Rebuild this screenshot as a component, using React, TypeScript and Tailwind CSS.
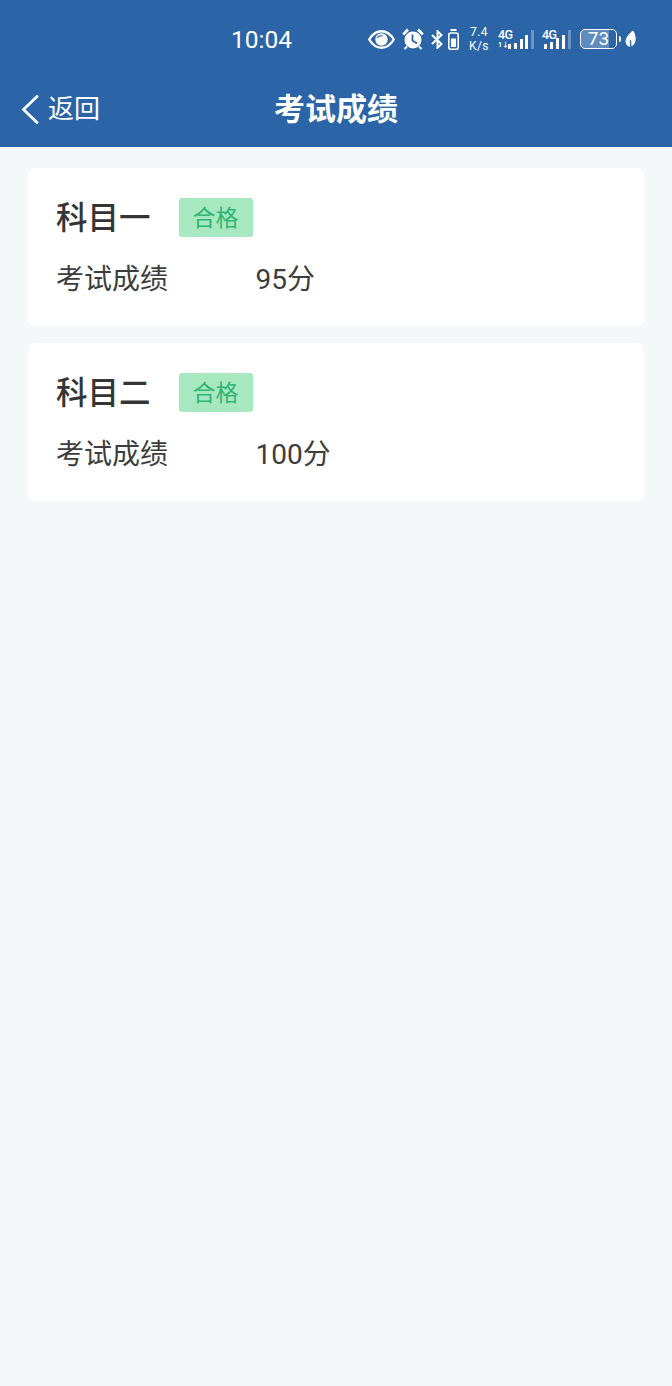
import React from "react";

const fontStack = "font-['Roboto','Noto_Sans_CJK_SC',sans-serif]";

const BAR_COLOR = "#2b65a8";

const SignalBars = ({ heights, gap }: { heights: number[]; gap: string }) => (
  <div className={`flex items-end h-[20px] ${gap}`}>
    {heights.map((h, i) => (
      <div
        key={i}
        className={i === heights.length - 1 ? "w-[3px] bg-white/30" : "w-[3px] bg-white"}
        style={{ height: h }}
      />
    ))}
  </div>
);

const StatusBar = () => (
  <div className="h-[80px] flex items-start text-white">
    <div className="ml-[231px] mt-[25px] w-[137px] text-[24.5px] leading-[30px]">10:04</div>
    <div className="flex items-center mt-[26px] h-[26px]">
      {/* eye */}
      <svg width="27" height="19" viewBox="0 0 27 19">
        <path d="M1.200 9.500C4.500 4 8.500 1.300 13.500 1.300S22.500 4 25.800 9.500C22.500 15 18.500 17.700 13.500 17.700S4.500 15 1.200 9.500Z" fill="none" stroke="#fff" strokeWidth="2.400" />
        <circle cx="13.500" cy="9.500" r="6.200" fill="#fff" />
        <path d="M8.500 8.500C9.500 5.500 13 4.500 16 6C13.500 6 11 6.800 8.500 8.500Z" fill={BAR_COLOR} />
      </svg>
      {/* alarm */}
      <svg className="ml-[7px]" width="22" height="22" viewBox="0 0 22 22">
        <circle cx="11" cy="12" r="8.500" fill="#fff" />
        <path d="M10.500 6.500v6l4.500 3" fill="none" stroke={BAR_COLOR} strokeWidth="1.800" />
        <path d="M1.200 6.500L6 1.500M20.800 6.500L16 1.500" fill="none" stroke="#fff" strokeWidth="2.600" />
        <path d="M5 18.500l-2.500 2.500M17 18.500l2.500 2.500" fill="none" stroke="#fff" strokeWidth="2" />
      </svg>
      {/* bluetooth off */}
      <svg className="ml-[7px]" width="12" height="19" viewBox="0 0 12 19">
        <path d="M1 5l9.500 9-4 3.800V1.200l4 3.800L1 14" fill="none" stroke="#fff" strokeWidth="2" />
      </svg>
      {/* small battery */}
      <svg className="ml-[5px]" width="11" height="21" viewBox="0 0 11 21">
        <rect x="2.500" y="0" width="6" height="2" fill="#fff" />
        <rect x="0.800" y="4" width="9.400" height="16.200" rx="2" fill="none" stroke="#fff" strokeWidth="1.600" />
        <rect x="3" y="9.500" width="5" height="8.500" fill="#fff" />
      </svg>
      {/* speed */}
      <div className="ml-[9px] w-[22px] text-[12px] leading-[14px] tracking-[0.4px] text-center">
        <div>7.4</div>
        <div>K/s</div>
      </div>
      {/* sim 1 */}
      <div className="ml-[8px] relative w-[36px] h-[20px] flex justify-end items-end">
        <div className="absolute left-0 top-0 text-[12.500px] leading-[12px] tracking-[-0.500px] font-medium">4G</div>
        <div className="absolute left-0 bottom-0 text-[7px] leading-[7px] font-bold">1↓</div>
        <SignalBars heights={[5, 6, 10, 14, 19]} gap="gap-[2.750px]" />
      </div>
      {/* sim 2 */}
      <div className="ml-[8px] relative w-[29px] h-[20px] flex justify-end items-end">
        <div className="absolute left-0 top-0 text-[12.500px] leading-[12px] tracking-[-0.500px] font-medium">4G</div>
        <SignalBars heights={[5, 7, 11, 14, 19]} gap="gap-[3px]" />
      </div>
      {/* battery */}
      <div className="ml-[9px] relative w-[37px] h-[20px] rounded-[5px] border-[1.500px] border-white flex items-center justify-center text-[19px] leading-[18px]">
        <div className="absolute left-0 top-0 bottom-0 w-[80%] rounded-l-[3px] bg-white/25" />
        <span className="relative">73</span>
      </div>
      <div className="ml-[2px] w-[2px] h-[6px] bg-white rounded-r-sm" />
      {/* leaf */}
      <svg className="ml-[4px]" width="11" height="18" viewBox="0 0 11 18">
        <path d="M8 0.500C10.500 4 11 7.500 10.500 10.500C10 13.500 8.500 15.500 6.500 16.500L6 10L4.800 10.500L5 17C2.500 16.500.5 14 .5 11.500.5 8 4 3.500 8 .5Z" fill="#fff" />
      </svg>
    </div>
  </div>
);

const ScoreCard = ({ subject, score }: { subject: string; score: string }) => (
  <div className="h-[158px] bg-white rounded-[7px] px-[28px] pt-[30px]">
    <div className="flex items-center h-[39px]">
      <div className="w-[122.500px] text-[31.500px] leading-[39px] mt-[1px] font-medium text-[#353535]">{subject}</div>
      <div className="w-[74px] h-[38.500px] rounded-[3px] bg-[#a8e8c0] text-[#2fb574] text-[23px] leading-[41px] text-center">
        合格
      </div>
    </div>
    <div className="flex items-center mt-[23px] text-[#3d3d3d] text-[28px] leading-[40px]">
      <div className="w-[199.500px]">考试成绩</div>
      <div>{score}</div>
    </div>
  </div>
);

export default function App() {
  return (
    <div className={`${fontStack} min-h-[1386px] bg-[#f4f8f9]`}>
      <header className="h-[147px] bg-[#2b65a8]">
        <StatusBar />
        <div className="relative h-[67px] flex items-start justify-center text-white">
          <div className="absolute left-[21px] top-[10px] flex items-center">
            <svg width="18" height="29" viewBox="0 0 18 29">
              <path d="M16 1.500L2.500 14.500L16 27.500" fill="none" stroke="#fff" strokeWidth="2.800" strokeLinecap="round" />
            </svg>
            <span className="ml-[9px] text-[26px] leading-[38px]">返回</span>
          </div>
          <h1 className="mt-[10px] text-[31px] leading-[40px] font-bold">考试成绩</h1>
        </div>
      </header>
      <main className="pt-[21px] px-[28px] flex flex-col gap-[17px]">
        <ScoreCard subject="科目一" score="95分" />
        <ScoreCard subject="科目二" score="100分" />
      </main>
    </div>
  );
}
